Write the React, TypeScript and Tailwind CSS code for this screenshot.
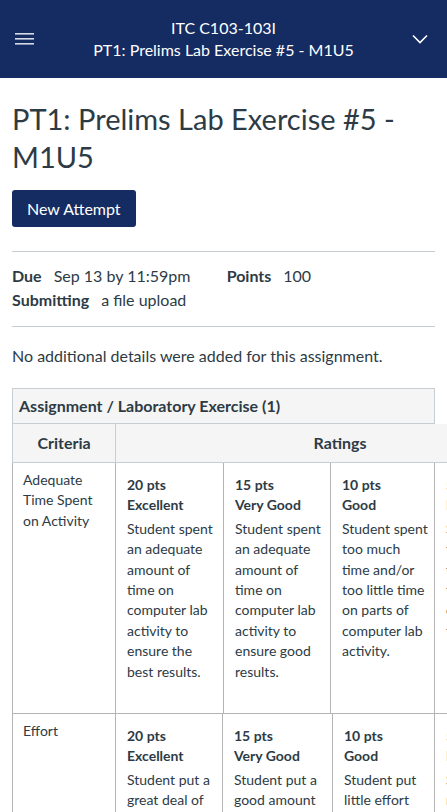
import React from "react";

type Tier = { pts: string; label: string; lines: string[] };
type Row = { criteria: string[]; widths: number[]; height: string; tiers: Tier[] };

const rows: Row[] = [
  {
    criteria: ["Adequate", "Time Spent", "on Activity"],
    widths: [104, 108, 107, 104, 140],
    height: "h-[251px]",
    tiers: [
      {
        pts: "20 pts",
        label: "Excellent",
        lines: ["Student spent", "an adequate", "amount of", "time on", "computer lab", "activity to", "ensure the", "best results."],
      },
      {
        pts: "15 pts",
        label: "Very Good",
        lines: ["Student spent", "an adequate", "amount of", "time on", "computer lab", "activity to", "ensure good", "results."],
      },
      {
        pts: "10 pts",
        label: "Good",
        lines: ["Student spent", "too much", "time and/or", "too little time", "on parts of", "computer lab", "activity."],
      },
      {
        pts: "5 pts",
        label: "Fair",
        lines: ["Student spent", "too much", "time and/or", "too little time", "on most of", "the activity."],
      },
    ],
  },
  {
    criteria: ["Effort"],
    widths: [104, 107, 110, 102, 140],
    height: "h-[200px]",
    tiers: [
      {
        pts: "20 pts",
        label: "Excellent",
        lines: ["Student put a", "great deal of", "effort into", "the activity."],
      },
      {
        pts: "15 pts",
        label: "Very Good",
        lines: ["Student put a", "good amount", "of effort into", "the activity."],
      },
      {
        pts: "10 pts",
        label: "Good",
        lines: ["Student put", "little effort", "into the", "activity."],
      },
      {
        pts: "5 pts",
        label: "Fair",
        lines: ["Student put", "no effort", "into the", "activity."],
      },
    ],
  },
];

const App = () => {
  return (
    <div className="w-[447px] h-[812px] overflow-hidden bg-white text-[#2d3b45]" style={{ fontFamily: "Lato, 'Open Sans', sans-serif" }}>
      {/* top nav */}
      <div className="h-[78px] bg-[#152c63] flex items-center justify-between pl-[15px] pr-[19px] text-white">
        <svg width="20" height="14" viewBox="0 0 20 14" className="text-[#d4dae4]">
          <rect x="0" y="1" width="19" height="1.6" fill="currentColor" />
          <rect x="0" y="6" width="19" height="1.6" fill="currentColor" />
          <rect x="0" y="11" width="19" height="1.6" fill="currentColor" />
        </svg>
        <div className="flex flex-col items-center text-[16px] leading-[22px]">
          <span>ITC C103-103I</span>
          <span>PT1: Prelims Lab Exercise #5 - M1U5</span>
        </div>
        <svg width="16" height="10" viewBox="0 0 16 10">
          <polyline points="1,1.5 8,8.5 15,1.5" fill="none" stroke="white" strokeWidth="1.6" />
        </svg>
      </div>

      <div className="px-3">
        <h1 className="mt-[22px] text-[29px] leading-[38px] font-normal">PT1: Prelims Lab Exercise #5 - M1U5</h1>
        <button className="mt-[14px] h-[37px] px-[15px] rounded-[3px] bg-[#152c63] text-white text-[16px]">New Attempt</button>

        <div className="mt-[24px] border-t border-[#c7cdd1] pt-[12px] pb-[14px] text-[16px] leading-[24px]">
          <div className="flex">
            <span className="font-bold">Due</span>
            <span className="ml-[12px] w-[173px]">Sep 13 by 11:59pm</span>
            <span className="font-bold">Points</span>
            <span className="ml-[12px]">100</span>
          </div>
          <div className="flex">
            <span className="font-bold">Submitting</span>
            <span className="ml-[12px]">a file upload</span>
          </div>
        </div>

        <div className="border-t border-[#c7cdd1] pt-[17px] text-[16px] leading-[24px]">No additional details were added for this assignment.</div>
      </div>

      {/* rubric */}
      <div className="mt-[20px] ml-3 overflow-hidden">
        <div className="w-[423px] h-[36px] border border-[#c7cdd1] bg-[#f5f5f5] flex items-center px-[6px] font-bold text-[16px]">
          Assignment / Laboratory Exercise (1)
        </div>
        <div className="w-[700px] h-[39px] border border-t-0 border-[#c7cdd1] bg-[#f5f5f5] flex font-bold text-[16px]">
          <div className="w-[103px] flex items-center justify-center border-r border-[#c7cdd1]">Criteria</div>
          <div className="w-[448px] flex items-center justify-center">Ratings</div>
        </div>
        {rows.map((row, i) => (
          <div key={i} className={`w-[700px] ${row.height} flex border-l border-b border-[#b4b4b4] text-[14px] leading-[20.4px]`}>
            <div className="shrink-0 border-r border-[#b4b4b4] pl-[10px] pt-[7px]" style={{ width: row.widths[0] - 1 }}>
              {row.criteria.map((c) => (
                <div key={c}>{c}</div>
              ))}
            </div>
            {row.tiers.map((t, j) => (
              <div key={j} className="shrink-0 border-r border-[#b4b4b4] pl-[11px] pt-[12px] whitespace-nowrap" style={{ width: row.widths[j + 1] }}>
                <div className="font-bold">{t.pts}</div>
                <div className="font-bold">{t.label}</div>
                <div className="mt-[3px]">
                  {t.lines.map((l, k) => (
                    <div key={k}>{l}</div>
                  ))}
                </div>
              </div>
            ))}
          </div>
        ))}
      </div>
    </div>
  );
};

export default App;
